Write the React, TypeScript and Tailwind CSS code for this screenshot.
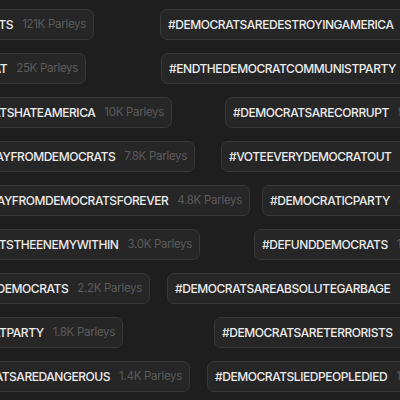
import React from "react";

type Row = {
  lw: string;
  gap: string;
  left: string;
  leftCount: string;
  right: string;
  rightCount: string;
};

const rows: Row[] = [
  { lw: "w-[94px]", gap: "ml-[66px]", left: "#DEMOCRATS", leftCount: "121K Parleys", right: "#DEMOCRATSAREDESTROYINGAMERICA", rightCount: "9.1K Parleys" },
  { lw: "w-[86px]", gap: "ml-[75px]", left: "#DEMOCRAT", leftCount: "25K Parleys", right: "#ENDTHEDEMOCRATCOMMUNISTPARTY", rightCount: "8.2K Parleys" },
  { lw: "w-[172px]", gap: "ml-[53px]", left: "#DEMOCRATSHATEAMERICA", leftCount: "10K Parleys", right: "#DEMOCRATSARECORRUPT", rightCount: "9.5K Parleys" },
  { lw: "w-[195px]", gap: "ml-[26px]", left: "#WALKAWAYFROMDEMOCRATS", leftCount: "7.8K Parleys", right: "#VOTEEVERYDEMOCRATOUT", rightCount: "6.3K Parleys" },
  { lw: "w-[250px]", gap: "ml-[12px]", left: "#WALKAWAYFROMDEMOCRATSFOREVER", leftCount: "4.8K Parleys", right: "#DEMOCRATICPARTY", rightCount: "4.1K Parleys" },
  { lw: "w-[200px]", gap: "ml-[54px]", left: "#DEMOCRATSTHEENEMYWITHIN", leftCount: "3.0K Parleys", right: "#DEFUNDDEMOCRATS", rightCount: "1.9K Parleys" },
  { lw: "w-[150px]", gap: "ml-[17px]", left: "#ABOLISHDEMOCRATS", leftCount: "2.2K Parleys", right: "#DEMOCRATSAREABSOLUTEGARBAGE", rightCount: "2.0K Parleys" },
  { lw: "w-[123px]", gap: "ml-[91px]", left: "#DEMOCRATPARTY", leftCount: "1.8K Parleys", right: "#DEMOCRATSARETERRORISTS", rightCount: "1.5K Parleys" },
  { lw: "w-[190px]", gap: "ml-[17px]", left: "#DEMOCRATSAREDANGEROUS", leftCount: "1.4K Parleys", right: "#DEMOCRATSLIEDPEOPLEDIED", rightCount: "1.2K Parleys" },
];

function Chip({ tag, count, extra = "" }: { tag: string; count: string; extra?: string }) {
  return (
    <div
      className={`flex shrink-0 items-center gap-[9px] h-[31px] px-[7px] rounded-[7px] border border-[#393939] bg-[#262626] whitespace-nowrap ${extra}`}
    >
      <span className="text-[12px] font-medium text-[#ededed] tracking-[-0.45px]">{tag}</span>
      <span className="text-[11.5px] font-normal text-[#5c5c5c] tracking-[-0.3px]">{count}</span>
    </div>
  );
}

export default function App() {
  return (
    <div
      className="w-[400px] h-[400px] overflow-hidden bg-[#1e1e1e] flex flex-col gap-[13px] pt-[9px]"
      style={{ fontFamily: "Inter, 'Open Sans', sans-serif" }}
    >
      {rows.map((r, i) => (
        <div key={i} className="flex shrink-0 h-[31px] w-[400px] overflow-hidden">
          <div className={`${r.lw} shrink-0 flex justify-end`}>
            <Chip tag={r.left} count={r.leftCount} />
          </div>
          <Chip tag={r.right} count={r.rightCount} extra={r.gap} />
        </div>
      ))}
    </div>
  );
}
